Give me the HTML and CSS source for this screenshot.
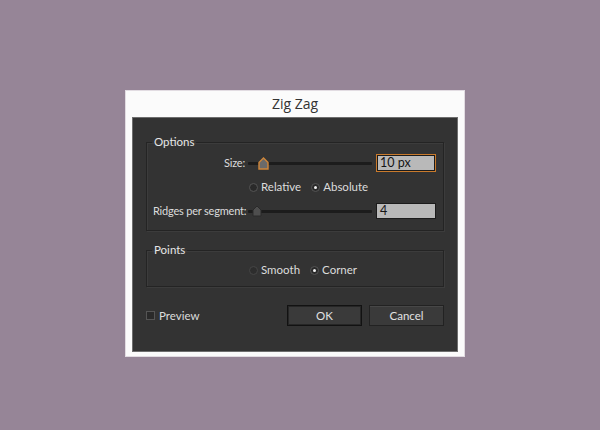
FILE: index.html
```html
<!DOCTYPE html>
<html>
<head>
<meta charset="utf-8">
<link rel="stylesheet" href="styles.css">
</head>
<body>
<div class="dialog">
  <div class="title">Zig Zag</div>
  <div class="panel">
    <fieldset class="group options">
      <legend>Options</legend>
      <div class="grid">
        <div class="label">Size:</div>
        <div class="slider"><div class="track"></div>
          <svg class="thumb active" style="left:10px" width="11" height="13" viewBox="0 0 11 13"><path d="M1 12 V5.5 L5.5 1 L10 5.5 V12 Z" fill="#6a6a6a" stroke="#d0873a" stroke-width="1.4"/></svg>
        </div>
        <div class="input focused">10 px</div>

        <div class="radios">
          <span class="radio"></span><span class="rtext">Relative</span>
          <span class="radio on"></span><span class="rtext">Absolute</span>
        </div>

        <div class="label">Ridges per segment:</div>
        <div class="slider"><div class="track"></div>
          <svg class="thumb" style="left:4px" width="10" height="12" viewBox="0 0 10 12"><path d="M1 11 V5 L5 1 L9 5 V11 Z" fill="#4e4e4e" stroke="#2a2a2a" stroke-width="1"/></svg>
        </div>
        <div class="input">4</div>
      </div>
    </fieldset>

    <fieldset class="group points">
      <legend>Points</legend>
      <div class="prow">
        <span class="radio"></span><span class="rtext">Smooth</span>
        <span class="radio on"></span><span class="rtext">Corner</span>
      </div>
    </fieldset>

    <div class="bottom">
      <label class="check"><span class="box"></span><span>Preview</span></label>
      <div class="buttons">
        <div class="btn default">OK</div>
        <div class="btn">Cancel</div>
      </div>
    </div>
  </div>
</div>
</body>
</html>
```

FILE: styles.css
```css
html, body {
  margin: 0;
  padding: 0;
}
body {
  background: #968597;
  width: 600px;
  height: 430px;
  padding: 90px 0 0 125px;
  box-sizing: border-box;
  font-family: "Lato", "Open Sans", sans-serif;
}
.dialog {
  width: 340px;
  height: 267px;
  background: #fbfbfb;
  box-sizing: border-box;
  border: 1px solid #e2dce2;
  padding: 0 6px;
}
.title {
  height: 26px;
  line-height: 25px;
  text-align: center;
  font-size: 14px;
  color: #333;
  font-family: "Open Sans", sans-serif;
}
.panel {
  height: 235px;
  background: #333333;
  border: 1px solid #6e6e6e;
  box-sizing: border-box;
  padding: 18px 13px 0 13px;
  color: #dcdcdc;
  font-size: 11px;
}
.group {
  margin: 0;
  padding: 0;
  border: 1px solid #242424;
  box-shadow: 1px 1px 0 #3c3c3c, inset 1px 1px 0 #3c3c3c;
  min-width: 0;
}
.group legend {
  margin-left: -1px;
  padding: 0 2px;
  line-height: 12px;
  height: 12px;
  font-size: 11.5px;
  color: #e6e6e6;
}
.options {
  padding: 6px 6px 10px 6px;
}
.grid {
  display: grid;
  grid-template-columns: 92px 124px 61px;
  column-gap: 3px;
  row-gap: 8px;
  align-items: center;
}
.grid > .input { margin-left: 1px; }
.label {
  text-align: right;
  white-space: nowrap;
  height: 18px;
  line-height: 18px;
  letter-spacing: -0.2px;
}
.slider {
  position: relative;
  height: 18px;
}
.track {
  position: absolute;
  left: 0;
  right: 0;
  top: 8px;
  height: 3px;
  background: #1c1c1c;
  border-radius: 1px;
}
.thumb {
  position: absolute;
  top: 3px;
}
.input {
  height: 16px;
  box-sizing: border-box;
  background: #b9b9b9;
  border: 1px solid #1c1c1c;
  color: #151515;
  font-size: 12.5px;
  line-height: 14px;
  padding-left: 3px;
}
.input.focused {
  height: 18px;
  border: 1px solid #c97a2c;
  box-shadow: inset 0 0 0 1px #1c1c1c;
  line-height: 16px;
}
.radios {
  grid-column: 2 / 4;
  display: flex;
  align-items: center;
  height: 14px;
  padding-left: 1px;
  font-size: 11.5px;
}
.radio {
  width: 9px;
  height: 9px;
  box-sizing: border-box;
  border-radius: 50%;
  background: #2a2a2a;
  border: 1px solid #555;
  margin-right: 3px;
  position: relative;
}
.radio.on::after {
  content: "";
  position: absolute;
  left: 2px;
  top: 2px;
  width: 3px;
  height: 3px;
  border-radius: 50%;
  background: #f0f0f0;
}
.rtext {
  margin-right: 10px;
  line-height: 14px;
}
.points {
  margin-top: 13px;
  padding: 7px 6px 9px 6px;
}
.prow {
  display: flex;
  align-items: center;
  height: 14px;
  padding-left: 96px;
  font-size: 11.5px;
}
.prow .radio:first-child { background: #2d2d2d; border-color: #464646; }
.bottom {
  margin-top: 18px;
  display: flex;
  align-items: center;
  justify-content: space-between;
  font-size: 11.5px;
}
.check {
  display: flex;
  align-items: center;
  gap: 4px;
  margin-top: -1px;
}
.box {
  width: 9px;
  height: 9px;
  box-sizing: border-box;
  background: #2a2a2a;
  border: 1px solid #555;
}
.buttons {
  display: flex;
  gap: 7px;
}
.btn {
  width: 75px;
  height: 21px;
  box-sizing: border-box;
  background: #3a3a3a;
  border: 1px solid #222;
  box-shadow: inset 0 1px 0 #474747;
  text-align: center;
  line-height: 19px;
  font-size: 11.5px;
  color: #e2e2e2;
}
.btn.default {
  border: 1px solid #121212;
  box-shadow: inset 0 0 0 1px #262626;
}
```
